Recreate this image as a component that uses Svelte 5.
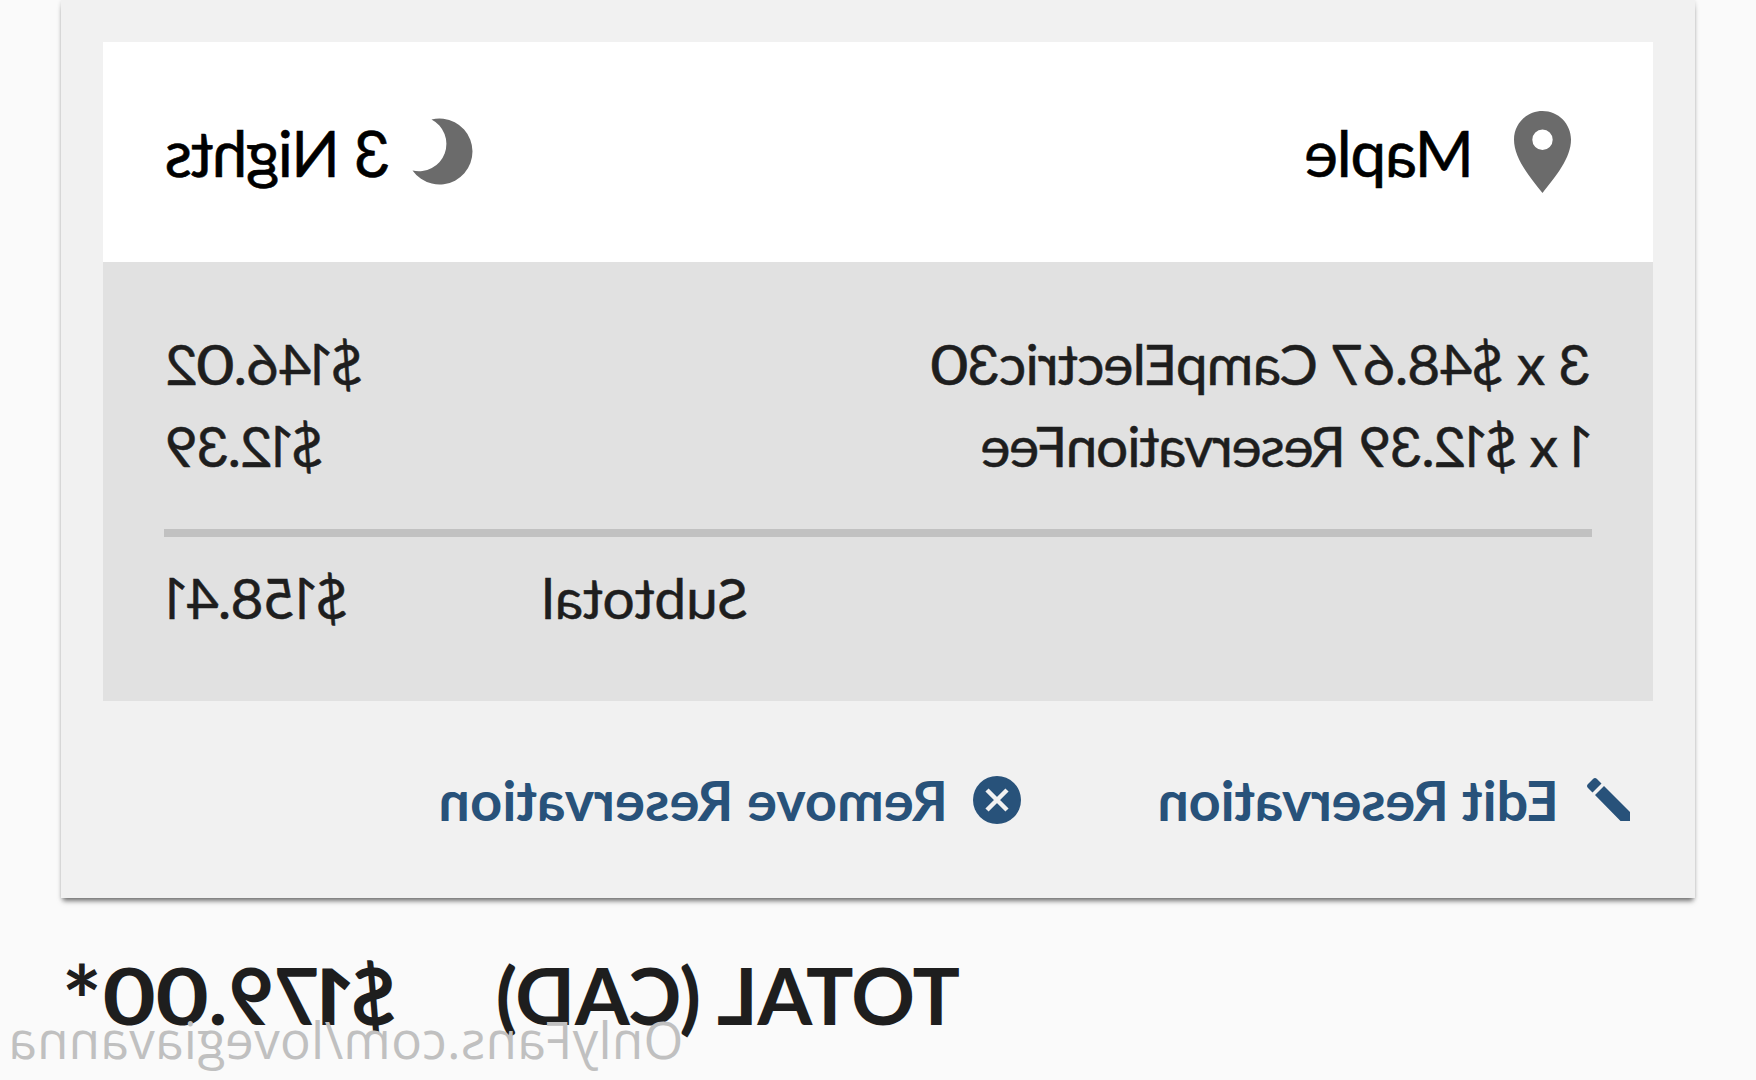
<script lang="ts">
	interface Item {
		label: string;
		amount: string;
		cls: string;
	}

	let items: Item[] = [
		{ label: '3 x $48.67 CampElectric30', amount: '$146.02', cls: 'camp' },
		{ label: '1 x $12.39 ReservationFee', amount: '$12.39', cls: 'fee' }
	];
</script>

<!-- ones without a foot and round zeros -->
{#snippet figures(text: string)}
	{#each text.split(/([01*])/) as part}{#if part === '1'}<span class="one">1</span>{:else if part === '0'}<span class="zero">0</span>{:else if part === '*'}<span class="star">*</span>{:else}{part}{/if}{/each}
{/snippet}

<main>
	<section class="card">
		<header>
			<svg class="pin" viewBox="0 0 57 82">
				<path
					fill-rule="evenodd"
					d="M28.5 0C12.8 0 0 12.7 0 28.5 0 47 15 65 28.5 82 42 65 57 47 57 28.5 57 12.7 44.2 0 28.5 0Zm0 18.5a10.2 10.2 0 1 1 0 20.4 10.2 10.2 0 0 1 0-20.4Z"
				/>
			</svg>
			<span class="site">Maple</span>
			<svg class="moon" viewBox="0 0 60 66">
				<path d="M40.500 0.500A33 33 0 1 0 59.500 51.500A27.400 27.400 0 0 1 40.500 0.500Z" />
			</svg>
			<span class="nights">3 Nights</span>
		</header>
		<div class="details">
			{#each items as item}
				<div class="row">
					<span class={item.cls}>{@render figures(item.label)}</span>
					<span class="amount {item.cls}-amount">{@render figures(item.amount)}</span>
				</div>
			{/each}
			<hr />
			<div class="row">
				<span class="subtotal">Subtotal</span>
				<span class="amount sum">{@render figures('$158.41')}</span>
			</div>
		</div>
		<nav>
			<a class="edit" href="#edit">
				<svg class="pencil" viewBox="0 0 43 43">
					<path d="M0 34 26 8 35 17 9.500 43H0ZM28.500 5.500 33 1Q35 -1 37 1L42 6Q44 8 42 10L37.500 14.500Z" />
				</svg>
				<span>Edit Reservation</span>
			</a>
			<a class="remove" href="#remove">
				<svg class="cross" viewBox="0 0 48 48">
					<circle cx="24" cy="24" r="24" />
					<path d="M14 14 34 34M34 14 14 34" />
				</svg>
				<span>Remove Reservation</span>
			</a>
		</nav>
	</section>
	<footer>
		<span class="total">TOTAL (CAD)</span>
		<span class="price">{@render figures('$179.00*')}</span>
	</footer>
	<div class="watermark">OnlyFans.com/lovegiavanna</div>
</main>

<style>
	:global(body) {
		background: #fafafa;
		overflow: hidden;
	}
	main {
		position: relative;
		box-sizing: border-box;
		width: 1756px;
		height: 1080px;
		padding: 0 61px;
		overflow: hidden;
		background: #fafafa;
		color: #1e1e1e;
		font-family: Lato, 'Open Sans', sans-serif;
		font-variant-ligatures: none;
		white-space: nowrap;
		/* the whole page is flipped, as in a mirror */
		transform: scaleX(-1);
	}
	svg {
		flex: none;
		overflow: visible;
	}
	.one {
		margin: 0 -0.14em 0 -0.06em;
		font-family: 'Open Sans', sans-serif;
		line-height: 1;
	}
	.zero {
		display: inline-block;
		margin: 0 0.04em;
		line-height: 1;
		transform: scaleX(1.16);
	}
	.star {
		font-size: 1.2em;
		line-height: 1;
		vertical-align: -0.12em;
	}
	.card {
		box-sizing: border-box;
		height: 898px;
		padding: 42px 42px 0;
		background: #f1f1f1;
		box-shadow:
			0 5px 5px -2px rgba(0, 0, 0, 0.5),
			0 1px 4px rgba(0, 0, 0, 0.14);
	}
	header {
		display: flex;
		align-items: center;
		box-sizing: border-box;
		height: 220px;
		padding: 0 63px 0 82px;
		background: #fff;
		color: #000;
		font-size: 64px;
		-webkit-text-stroke: 0.6px;
	}
	.pin {
		width: 57px;
		height: 82px;
		fill: #6b6b6b;
	}
	.site {
		margin-left: 40px;
		letter-spacing: -1.3px;
	}
	.moon {
		width: 60px;
		height: 66px;
		margin-left: auto;
		fill: #6b6b6b;
	}
	.nights {
		margin-left: 22px;
		letter-spacing: -1.5px;
	}
	.details {
		box-sizing: border-box;
		height: 439px;
		padding: 60px 61px 0;
		background: #e1e1e1;
		font-size: 57px;
		line-height: 82px;
		-webkit-text-stroke: 0.5px;
	}
	.row {
		display: flex;
		justify-content: space-between;
		height: 82px;
		padding: 0 2px 0 1px;
		letter-spacing: -1px;
	}
	.fee {
		letter-spacing: -1.4px;
	}
	.fee-amount {
		letter-spacing: -1.5px;
	}
	.sum {
		letter-spacing: -0.8px;
	}
	hr {
		height: 8px;
		margin: 43px 0 19px;
		border: 0;
		background: #c1c1c1;
	}
	.subtotal {
		margin-left: 843px;
		letter-spacing: -0.2px;
	}
	nav {
		display: flex;
		align-items: center;
		height: 197px;
		padding-left: 23px;
		font-size: 56px;
		font-weight: 700;
	}
	a {
		display: flex;
		align-items: center;
		color: #28527a;
		text-decoration: none;
	}
	.pencil {
		width: 43px;
		height: 43px;
		fill: #28527a;
	}
	.edit {
		width: 609px;
		gap: 28px;
		letter-spacing: -0.35px;
	}
	.remove {
		gap: 25px;
	}
	.cross {
		width: 48px;
		height: 48px;
		fill: #28527a;
	}
	.cross path {
		stroke: #f1f1f1;
		stroke-width: 4.5;
	}
	footer {
		display: flex;
		justify-content: space-between;
		height: 120px;
		margin-top: 37px;
		padding: 0 0 0 735px;
		font-size: 79px;
		font-weight: 700;
		line-height: 120px;
	}
	.total {
		letter-spacing: -0.5px;
	}
	.price {
		letter-spacing: 0.7px;
	}
	.watermark {
		position: absolute;
		right: 8px;
		bottom: 6px;
		color: #c0c0c0;
		font-family: 'Open Sans', sans-serif;
		font-size: 51px;
		letter-spacing: 0.4px;
		line-height: 70px;
	}
</style>
